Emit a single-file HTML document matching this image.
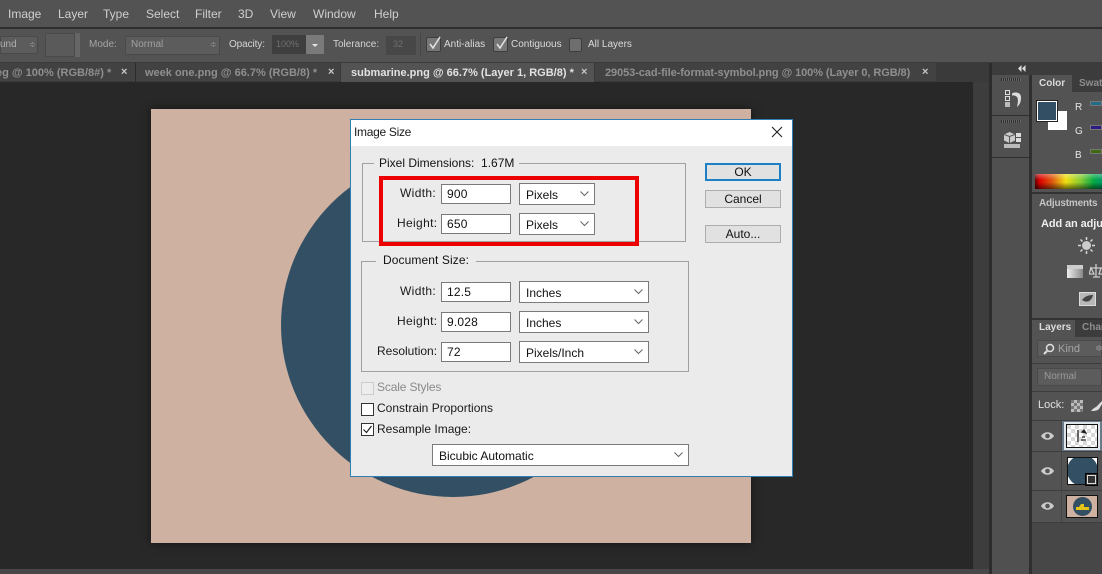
<!DOCTYPE html>
<html><head><meta charset="utf-8"><style>
html,body{margin:0;padding:0}
body{width:1102px;height:574px;overflow:hidden;position:relative;background:#282828;font-family:"Liberation Sans",sans-serif}
div,span{position:absolute;box-sizing:border-box;white-space:nowrap}
.m{top:7px;font-size:12px;color:#cfcfcf;line-height:14px}
.o{top:38px;font-size:10px;line-height:13px;color:#d4d4d4}
.t{top:67px;font-size:11px;line-height:13px;font-weight:700;color:#8f8f8f}
.x{top:66px;font-size:11px;line-height:13px;color:#c8c8c8;font-weight:700}
.cb{width:15px;height:15px;background:#777;border:1px solid #3d3d3d;border-radius:2px}
.d{font-size:12px;line-height:15px;color:#1a1a1a}
.l{letter-spacing:.35px}
.in{height:20px;background:#fff;border:1px solid #7a7a7a;font-size:12px;line-height:19px;padding-left:5px;color:#111;letter-spacing:.2px}
.se{height:22px;background:#fff;border:1px solid #7a7a7a;font-size:12px;line-height:22px;padding-left:6px;color:#111}
.se svg{position:absolute;right:5px;top:7px}
.fs{border:1px solid #a0a0a0}
.lg{background:#ebebeb;font-size:12px;line-height:15px;color:#111;padding:0 5px}
.btn{left:705px;width:76px;height:18px;background:#e1e1e1;border:1px solid #adadad;font-size:12px;line-height:17px;text-align:center;color:#111}
.ck{width:13px;height:13px;background:#fff;border:1px solid #333}
.pt{font-size:10px;line-height:12px;color:#cfcfcf}
</style></head><body>

<!-- menu -->
<div style="left:0;top:0;width:1102px;height:27px;background:#535353"></div>
<div style="left:0;top:27px;width:1102px;height:2px;background:#2e2e2e"></div>
<span class="m" style="left:8px">Image</span>
<span class="m" style="left:58px">Layer</span>
<span class="m" style="left:103px">Type</span>
<span class="m" style="left:146px">Select</span>
<span class="m" style="left:195px">Filter</span>
<span class="m" style="left:238px">3D</span>
<span class="m" style="left:270px">View</span>
<span class="m" style="left:313px">Window</span>
<span class="m" style="left:374px">Help</span>

<!-- options -->
<div style="left:0;top:29px;width:1102px;height:33px;background:#535353"></div>
<div style="left:0;top:62px;width:1102px;height:1px;background:#3b3b3b"></div>
<div style="left:0;top:36px;width:38px;height:18px;background:#5c5c5c;border:1px solid #4a4a4a"></div>
<span class="o" style="left:0;color:#b0b0b0">und</span>
<span class="o" style="left:29px;top:38px;color:#999;font-size:8px">≑</span>
<div style="left:45px;top:33px;width:30px;height:24px;background:#5a5a5a;border:1px solid #4a4a4a"></div>
<div style="left:75px;top:33px;width:5px;height:24px;background:#666"></div>
<span class="o" style="left:89px;color:#a5a5a5">Mode:</span>
<div style="left:125px;top:36px;width:95px;height:19px;background:#5c5c5c;border:1px solid #4a4a4a"></div>
<span class="o" style="left:131px;color:#a0a0a0">Normal</span>
<span class="o" style="left:210px;color:#999;font-size:8px">≑</span>
<span class="o" style="left:229px;letter-spacing:-.1px">Opacity:</span>
<div style="left:272px;top:35px;width:34px;height:19px;background:#3f3f3f"></div>
<span class="o" style="left:276px;color:#707070;font-size:9px">100%</span>
<div style="left:306px;top:35px;width:18px;height:19px;background:#7a7a7a"></div>
<div style="left:312px;top:44px;width:0;height:0;border:3px solid transparent;border-top:3px solid #e5e5e5"></div>
<span class="o" style="left:333px">Tolerance:</span>
<div style="left:386px;top:36px;width:30px;height:19px;background:#474747"></div>
<span class="o" style="left:393px;color:#707070;font-size:9px">32</span>
<div style="left:420px;top:33px;width:1px;height:23px;background:#464646"></div>
<div class="cb" style="left:426px;top:37px"></div>
<svg style="position:absolute;left:426px;top:35px" width="17" height="16"><path d="M4 9l3 4 7-11" fill="none" stroke="#e4e4e4" stroke-width="1.500"/></svg>
<span class="o" style="left:444px;color:#dcdcdc">Anti-alias</span>
<div class="cb" style="left:493px;top:37px"></div>
<svg style="position:absolute;left:493px;top:35px" width="17" height="16"><path d="M4 9l3 4 7-11" fill="none" stroke="#e4e4e4" stroke-width="1.500"/></svg>
<span class="o" style="left:511px;color:#dcdcdc">Contiguous</span>
<div class="cb" style="left:569px;top:38px;background:#6e6e6e;width:13px;height:14px"></div>
<span class="o" style="left:588px;color:#dcdcdc">All Layers</span>

<!-- tabs -->
<div style="left:0;top:63px;width:990px;height:19px;background:#3a3a3a"></div>
<div style="left:0;top:63px;width:135px;height:18px;background:#424242"></div>
<span class="t" style="left:-4px">eg @ 100% (RGB/8#) *</span>
<span class="x" style="left:121px">×</span>
<div style="left:135px;top:63px;width:1px;height:19px;background:#2b2b2b"></div>
<div style="left:136px;top:63px;width:204px;height:18px;background:#424242"></div>
<span class="t" style="left:145px">week one.png @ 66.7% (RGB/8) *</span>
<span class="x" style="left:328px">×</span>
<div style="left:341px;top:63px;width:253px;height:19px;background:#535353"></div>
<span class="t" style="left:351px;color:#e2e2e2">submarine.png @ 66.7% (Layer 1, RGB/8) *</span>
<span class="x" style="left:581px">×</span>
<div style="left:595px;top:63px;width:341px;height:18px;background:#424242"></div>
<span class="t" style="left:605px;letter-spacing:-.08px">29053-cad-file-format-symbol.png @ 100% (Layer 0, RGB/8)</span>
<span class="x" style="left:922px">×</span>

<!-- canvas -->
<div style="left:151px;top:109px;width:600px;height:434px;background:#ceb1a1;box-shadow:0 0 9px rgba(0,0,0,.5);overflow:hidden">
  <div style="left:130px;top:44px;width:344px;height:344px;border-radius:50%;background:#324f64"></div>
</div>

<!-- scrollbars -->
<div style="left:973px;top:82px;width:16px;height:492px;background:#3d3d3d"></div>
<div style="left:0;top:569px;width:989px;height:5px;background:#474747"></div>

<!-- dock -->
<div style="left:989px;top:63px;width:3px;height:511px;background:#2c2c2c"></div>
<div style="left:992px;top:63px;width:110px;height:511px;background:#474747"></div>
<div style="left:992px;top:75px;width:37px;height:499px;background:#505050"></div>
<div style="left:992px;top:63px;width:110px;height:12px;background:#3c3c3c"></div>
<svg style="position:absolute;left:1018px;top:65px" width="8" height="7"><path d="M3.500 0v7L0 3.500zM7.500 0v7L4 3.500z" fill="#ddd"/></svg>
<div style="left:1029px;top:75px;width:3px;height:499px;background:#2f2f2f"></div>
<div style="left:1001px;top:78px;width:20px;height:3px;background:repeating-linear-gradient(90deg,#2f2f2f 0 1px,#666 1px 2px)"></div>
<svg style="position:absolute;left:1005px;top:90px" width="18" height="18"><rect x=".5" y=".5" width="4" height="4" fill="none" stroke="#ddd"/><rect x=".5" y="6.500" width="4" height="4" fill="none" stroke="#ddd"/><rect x="0" y="12" width="5" height="5" fill="#bbb"/><path d="M7 3.500c4-2 9-1 9 4 0 4-1 7-4 9.500 .5-3 1.500-6 .5-9-.8-2-3-3-5.500-2.500z" fill="#ddd"/></svg>
<div style="left:992px;top:115px;width:37px;height:1px;background:#2f2f2f"></div>
<div style="left:1001px;top:120px;width:20px;height:3px;background:repeating-linear-gradient(90deg,#2f2f2f 0 1px,#666 1px 2px)"></div>
<svg style="position:absolute;left:1004px;top:131px" width="17" height="18"><path d="M5.500 1l5.500 2.500v6L5.500 12 0 9.500v-6z" fill="#ccc"/><path d="M5.500 5v7M0 3.500l5.500 2 5.500-2" stroke="#555" fill="none"/><rect x="12" y="2" width="5" height="4" fill="#ddd"/><rect x="12" y="7" width="5" height="4" fill="#ddd"/><rect x="0" y="13" width="16" height="4" fill="#bbb"/></svg>
<div style="left:992px;top:157px;width:37px;height:1px;background:#2f2f2f"></div>

<!-- color panel -->
<div style="left:1032px;top:75px;width:70px;height:17px;background:#3c3c3c"></div>
<div style="left:1032px;top:75px;width:40px;height:17px;background:#535353"></div>
<span class="pt" style="left:1039px;top:78px;font-weight:700;color:#dcdcdc">Color</span>
<span class="pt" style="left:1079px;top:78px;color:#8e8e8e;font-weight:700">Swatches</span>
<div style="left:1032px;top:92px;width:70px;height:100px;background:#535353"></div>
<div style="left:1048px;top:111px;width:19px;height:19px;background:#fff"></div>
<div style="left:1037px;top:101px;width:20px;height:20px;background:#324f64;border:1px solid #fff;outline:1px solid #222"></div>
<span class="pt" style="left:1075px;top:102px;color:#e5e5e5">R</span>
<span class="pt" style="left:1075px;top:126px;color:#e5e5e5">G</span>
<span class="pt" style="left:1075px;top:150px;color:#e5e5e5">B</span>
<div style="left:1090px;top:101px;width:12px;height:5px;background:#1f6e86;border:1px solid #777"></div>
<div style="left:1090px;top:125px;width:12px;height:5px;background:#2c1a82;border:1px solid #777"></div>
<div style="left:1090px;top:149px;width:12px;height:5px;background:#3f6a10;border:1px solid #777"></div>
<div style="left:1035px;top:174px;width:67px;height:15px;background:linear-gradient(180deg,rgba(255,255,255,.35),rgba(255,255,255,0) 40%,rgba(0,0,0,0) 55%,rgba(0,0,0,.55)),linear-gradient(90deg,#600 0,#d00 7%,#e05a10 26%,#f0e010 46%,#8c3 68%,#0a4 88%,#096 100%)"></div>
<div style="left:1032px;top:192px;width:70px;height:2px;background:#333"></div>

<!-- adjustments -->
<div style="left:1032px;top:194px;width:70px;height:124px;background:#535353"></div>
<span class="pt" style="left:1039px;top:198px;font-weight:700;color:#c4c4c4;letter-spacing:-.2px">Adjustments</span>
<span class="pt" style="left:1041px;top:218px;font-weight:700;font-size:11px;color:#eee;letter-spacing:-.1px">Add an adjustment</span>
<svg style="position:absolute;left:1077px;top:236px" width="19" height="19"><circle cx="9.500" cy="9.500" r="4.500" fill="#ccc"/><path d="M9.500 1v3M9.500 15v3M1 9.500h3M15 9.500h3M3.500 3.500l2 2M13.500 13.500l2 2M3.500 15.500l2-2M13.500 5.500l2-2" stroke="#d5d5d5" stroke-width="1.500"/></svg>
<div style="left:1067px;top:265px;width:16px;height:13px;background:linear-gradient(90deg,#eee,#888);border-top:4px solid #ccc"></div>
<svg style="position:absolute;left:1089px;top:263px" width="13" height="16"><path d="M7 1v13M1 5h12M4 14h7M2 5l-2 6h5zM12 5l-2 6h4" fill="none" stroke="#ccc" stroke-width="1.300"/></svg>
<div style="left:1079px;top:292px;width:17px;height:14px;background:#b8b8b8;border:1px solid #ddd"></div>
<svg style="position:absolute;left:1079px;top:292px" width="17" height="14"><path d="M3 8c3-4 7-5 11-5-1 5-5 9-11 5z" fill="#444"/></svg>
<div style="left:1032px;top:318px;width:70px;height:2px;background:#333"></div>

<!-- layers -->
<div style="left:1032px;top:320px;width:70px;height:254px;background:#474747"></div>
<div style="left:1032px;top:320px;width:70px;height:17px;background:#3c3c3c"></div>
<div style="left:1032px;top:320px;width:43px;height:17px;background:#535353"></div>
<span class="pt" style="left:1039px;top:322px;font-weight:700;color:#dcdcdc">Layers</span>
<span class="pt" style="left:1082px;top:322px;font-weight:700;color:#8e8e8e">Channels</span>
<div style="left:1032px;top:337px;width:70px;height:185px;background:#535353"></div>
<div style="left:1037px;top:340px;width:65px;height:17px;background:#5c5c5c;border:1px solid #4a4a4a"></div>
<svg style="position:absolute;left:1043px;top:343px" width="12" height="12"><circle cx="7" cy="5" r="3.500" fill="none" stroke="#e0e0e0" stroke-width="1.500"/><path d="M4 8l-3 3" stroke="#e0e0e0" stroke-width="2"/></svg>
<span class="pt" style="left:1058px;top:343px;color:#a5a5a5;font-size:11px">Kind</span>
<span class="pt" style="left:1095px;top:343px;color:#999">≑</span>
<div style="left:1032px;top:363px;width:70px;height:1px;background:#3d3d3d"></div>
<div style="left:1037px;top:368px;width:65px;height:18px;background:#5c5c5c;border:1px solid #4a4a4a"></div>
<span class="pt" style="left:1044px;top:371px;color:#9a9a9a">Normal</span>
<div style="left:1032px;top:391px;width:70px;height:1px;background:#3d3d3d"></div>
<span class="pt" style="left:1038px;top:399px;color:#e0e0e0;font-size:11px">Lock:</span>
<div style="left:1071px;top:400px;width:12px;height:12px;background:repeating-conic-gradient(#bbb 0 25%,#777 0 50%) 0 0/6px 6px"></div>
<svg style="position:absolute;left:1091px;top:400px" width="11" height="12"><path d="M0 11c2-3 6-4 7-6l4-4v3l-3 5c-2 2-5 2-8 2z" fill="#ddd"/></svg>
<div style="left:1032px;top:420px;width:70px;height:1px;background:#3d3d3d"></div>
<div style="left:1061px;top:421px;width:41px;height:30px;background:#6a7a88"></div>
<div style="left:1032px;top:451px;width:70px;height:1px;background:#3d3d3d"></div>
<div style="left:1032px;top:490px;width:70px;height:1px;background:#3d3d3d"></div>
<div style="left:1032px;top:522px;width:70px;height:1px;background:#3d3d3d"></div>
<div style="left:1061px;top:421px;width:1px;height:101px;background:#454545"></div>
<svg style="position:absolute;left:1040px;top:431px" width="15" height="10"><path d="M1 5c3-5 10-5 13 0-3 5-10 5-13 0z" fill="#ccc"/><circle cx="7.500" cy="5" r="2.300" fill="#555"/></svg>
<svg style="position:absolute;left:1040px;top:466px" width="15" height="10"><path d="M1 5c3-5 10-5 13 0-3 5-10 5-13 0z" fill="#ccc"/><circle cx="7.500" cy="5" r="2.300" fill="#555"/></svg>
<svg style="position:absolute;left:1040px;top:501px" width="15" height="10"><path d="M1 5c3-5 10-5 13 0-3 5-10 5-13 0z" fill="#ccc"/><circle cx="7.500" cy="5" r="2.300" fill="#555"/></svg>
<div style="left:1064px;top:422px;width:36px;height:28px;border:2px solid #dfe6ea;background:#111"></div>
<div style="left:1067px;top:425px;width:30px;height:22px;background:repeating-conic-gradient(#fff 0 25%,#d8d8d8 0 50%) 0 0/8px 8px"></div>
<svg style="position:absolute;left:1076px;top:429px" width="11" height="14"><path d="M2 1v12M5 11h5M6 3l2-2 2 3zM6 8h3" stroke="#222" stroke-width="1.300" fill="#222"/></svg>
<div style="left:1067px;top:457px;width:31px;height:28px;background:#fff;border:1px solid #111;overflow:hidden"><div style="left:-1px;top:-3px;width:31px;height:31px;border-radius:50%;background:#324f64"></div></div>
<div style="left:1085px;top:473px;width:13px;height:13px;background:#333;border:1px solid #000"></div>
<div style="left:1087px;top:475px;width:9px;height:9px;border:1px solid #ddd"></div>
<div style="left:1066px;top:495px;width:32px;height:23px;background:#ceb1a1;border:1px solid #111"></div>
<div style="left:1073px;top:497px;width:19px;height:19px;border-radius:50%;background:#324f64"></div>
<svg style="position:absolute;left:1075px;top:501px" width="15" height="10"><path d="M1 9V6h3l2-3h3v3h5v3z" fill="#e6c417"/></svg>

<!-- dialog -->
<div style="left:350px;top:119px;width:443px;height:358px;background:#ebebeb;border:1px solid #2f7fb5"></div>
<div style="left:351px;top:120px;width:441px;height:26px;background:#fff"></div>
<span class="d" style="left:354px;top:125px;letter-spacing:-.3px">Image Size</span>
<svg style="position:absolute;left:771px;top:126px" width="12" height="12"><path d="M1 1l10 10M11 1L1 11" stroke="#222" stroke-width="1.100"/></svg>

<div class="fs" style="left:362px;top:163px;width:324px;height:79px"></div>
<span class="lg" style="left:374px;top:156px">Pixel Dimensions: &nbsp;1.67M</span>
<div style="left:379px;top:176px;width:260px;height:70px;border:4px solid #ec0000"></div>
<span class="d l" style="left:400px;top:186px">Width:</span>
<div class="in" style="left:441px;top:184px;width:70px">900</div>
<div class="se" style="left:519px;top:183px;width:76px">Pixels<svg width="9" height="6"><path d="M.5 .5l4 4 4-4" fill="none" stroke="#666"/></svg></div>
<span class="d l" style="left:397px;top:216px">Height:</span>
<div class="in" style="left:441px;top:214px;width:70px">650</div>
<div class="se" style="left:519px;top:213px;width:76px">Pixels<svg width="9" height="6"><path d="M.5 .5l4 4 4-4" fill="none" stroke="#666"/></svg></div>

<div class="fs" style="left:361px;top:261px;width:328px;height:111px"></div>
<span class="lg" style="left:376px;top:253px;padding:0 7px;letter-spacing:.1px">Document Size:</span>
<span class="d l" style="left:400px;top:284px">Width:</span>
<div class="in" style="left:441px;top:282px;width:70px">12.5</div>
<div class="se" style="left:519px;top:281px;width:130px">Inches<svg width="9" height="6"><path d="M.5 .5l4 4 4-4" fill="none" stroke="#666"/></svg></div>
<span class="d l" style="left:397px;top:314px">Height:</span>
<div class="in" style="left:441px;top:312px;width:70px">9.028</div>
<div class="se" style="left:519px;top:311px;width:130px">Inches<svg width="9" height="6"><path d="M.5 .5l4 4 4-4" fill="none" stroke="#666"/></svg></div>
<span class="d" style="left:377px;top:344px">Resolution:</span>
<div class="in" style="left:441px;top:342px;width:70px">72</div>
<div class="se" style="left:519px;top:341px;width:130px">Pixels/Inch<svg width="9" height="6"><path d="M.5 .5l4 4 4-4" fill="none" stroke="#666"/></svg></div>

<div class="ck" style="left:361px;top:382px;border-color:#ccc;background:#ededed"></div>
<span class="d" style="left:377px;top:380px;color:#8a8a8a;letter-spacing:-.15px">Scale Styles</span>
<div class="ck" style="left:361px;top:403px"></div>
<span class="d" style="left:377px;top:401px">Constrain Proportions</span>
<div class="ck" style="left:361px;top:423px"></div>
<svg style="position:absolute;left:361px;top:423px" width="13" height="13"><path d="M2.500 6.500l3 3 5-6.500" fill="none" stroke="#222" stroke-width="1.200"/></svg>
<span class="d" style="left:377px;top:422px">Resample Image:</span>
<div class="se" style="left:432px;top:444px;width:257px">Bicubic Automatic<svg width="9" height="6"><path d="M.5 .5l4 4 4-4" fill="none" stroke="#666"/></svg></div>

<div class="btn" style="top:163px;border:2px solid #1f7fc4;line-height:15px">OK</div>
<div class="btn" style="top:190px">Cancel</div>
<div class="btn" style="top:225px">Auto...</div>
</body></html>
